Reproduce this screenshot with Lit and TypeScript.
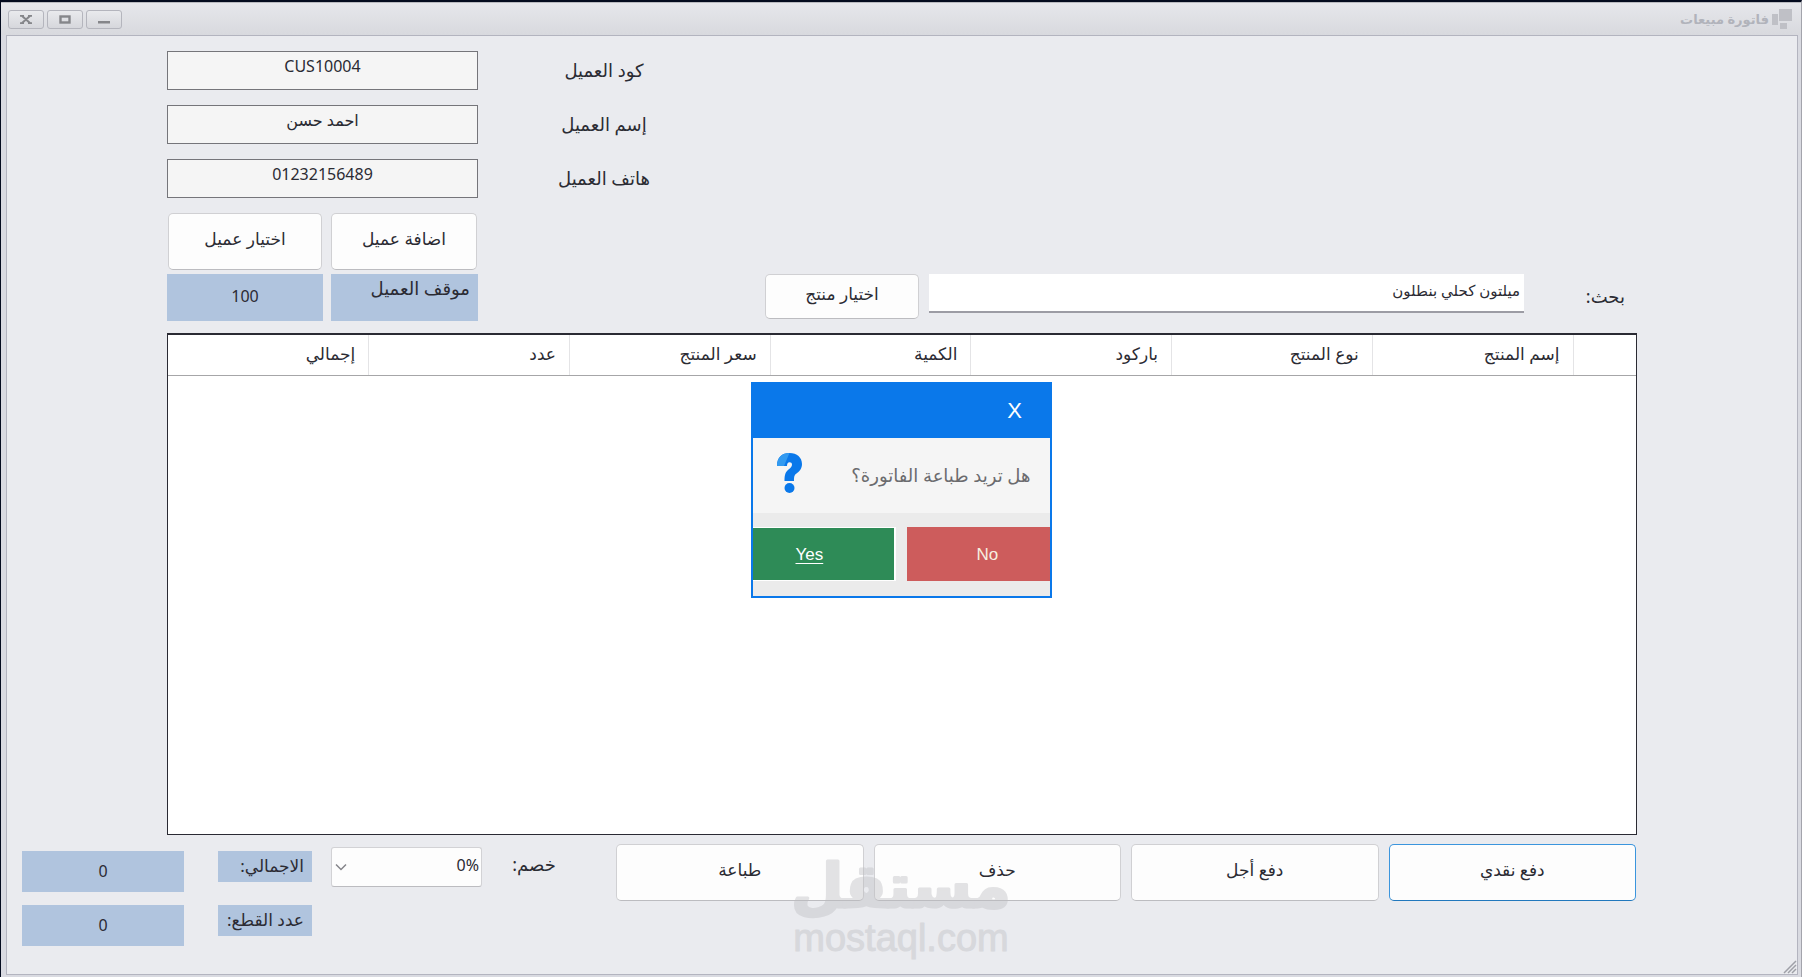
import { LitElement, html, css } from "lit";
import { customElement, state } from "lit/decorators.js";

const columns = ["إسم المنتج", "نوع المنتج", "باركود", "الكمية", "سعر المنتج", "عدد", "إجمالي"];

const actions = [
  { label: "دفع نقدي", primary: true },
  { label: "دفع أجل", primary: false },
  { label: "حذف", primary: false },
  { label: "طباعة", primary: false },
];

@customElement("app-root")
export class AppRoot extends LitElement {
  @state() private asking = true;

  static styles = css`
    :host {
      display: block;
      font-family: "Noto Sans", "DejaVu Sans", sans-serif;
      font-size: 16px;
      line-height: 24px;
      color: #2b2b33;
    }
    * { box-sizing: border-box; }
    button, input, select { font: inherit; color: inherit; margin: 0; }
    .window {
      position: relative;
      display: flex;
      flex-direction: column;
      min-height: 100vh;
      padding: 0 3px 2px 5px;
      background: #d9dae1;
      border-top: 2px solid #040b1e;
      border-left: 1px solid #040b1e;
      border-right: 1px solid #a3a4ac;
    }
    .titlebar {
      display: flex;
      align-items: center;
      justify-content: space-between;
      height: 33px;
      margin: 0 -3px 0 -5px;
      padding: 0 9px 0 7px;
      border-top: 1px solid #b9babf;
      background: linear-gradient(#e6e7eb, #d8d9de);
    }
    .title {
      display: flex;
      align-items: center;
      gap: 3px;
      margin: 0;
      font-size: 13px;
      line-height: 20px;
      font-weight: 700;
      color: #b1b3bb;
    }
    .controls { display: flex; gap: 3px; direction: ltr; }
    .control {
      display: grid;
      place-items: center;
      width: 36px;
      height: 19px;
      padding: 0;
      border: 1px solid #b4b5bd;
      border-radius: 3px;
      background: linear-gradient(#e9eaed, #d6d7dc);
    }
    .content {
      flex: 1;
      display: flex;
      flex-direction: column;
      padding: 15px 0 28px;
      border: 1px solid #b3b4bf;
      background: #eaebef;
    }
    .main {
      flex: 1;
      display: flex;
      flex-direction: column;
      padding: 0 160px;
    }
    .customer {
      align-self: flex-end;
      display: grid;
      grid-template-columns: 96px 311px;
      column-gap: 78px;
      row-gap: 15px;
      align-items: center;
    }
    .customer label { padding-bottom: 2px; text-align: center; white-space: nowrap; font-size: 18px; }
    .field {
      width: 100%;
      height: 39px;
      padding: 0 8px 9px;
      border: 1px solid #75757a;
      border-radius: 0;
      background: #f5f5f5;
      text-align: center;
      outline: none;
    }
    .pair {
      align-self: flex-end;
      display: grid;
      grid-template-columns: 147px 156px;
      column-gap: 8px;
      width: 311px;
    }
    .choices { margin: 15px 0 4px; padding: 0 1px; grid-template-columns: 146px 154px; column-gap: 9px; }
    .button {
      height: 57px;
      padding: 0 8px 6px;
      border: 1px solid #d0d0d3;
      border-bottom-color: #bcbcc0;
      border-radius: 5px;
      background: #fdfdfd;
      font-size: 17px;
    }
    .button.primary { border-color: #3b95dd; border-bottom-color: #2278bd; }
    .button.small { flex: none; width: 154px; height: 45px; }
    .search {
      display: flex;
      align-items: flex-start;
      gap: 10px;
      margin-bottom: 12px;
    }
    .search-label { width: 103px; padding: 10px 12px 0 0; white-space: nowrap; font-size: 18px; }
    .search-box {
      flex: 1;
      min-width: 0;
      height: 39px;
      padding: 0 4px 6px;
      border: 0;
      border-bottom: 2px solid #9c9ca4;
      background: #fff;
      font-size: 15px;
      text-align: right;
      outline: none;
    }
    .search .pair { margin-right: 277px; flex: none; align-self: auto; }
    .tag { background: #b0c4de; white-space: nowrap; }
    .status-label { height: 47px; padding: 2px 8px; font-size: 18px; }
    .status-value { height: 47px; line-height: 44px; text-align: center; }
    .grid {
      flex: 1;
      border: 1px solid #2a2a33;
      border-top-width: 2px;
      background: #fff;
    }
    table { width: 100%; border-collapse: collapse; table-layout: fixed; }
    th {
      height: 40px;
      padding: 0 13px 2px;
      border-left: 1px solid #e4e4e6;
      border-bottom: 1px solid #a6a6a8;
      font-size: 17px;
      font-weight: 400;
      text-align: right;
    }
    th:last-child { border-left: 0; }
    .selector { width: 63px; }
    .footer {
      display: flex;
      align-items: flex-start;
      padding: 9px 161px 0 15px;
    }
    .actions {
      flex: 1;
      display: grid;
      grid-template-columns: repeat(4, 1fr);
      gap: 10px;
    }
    .discount-label {
      width: 104px;
      margin-right: 30px;
      padding-top: 8px;
      text-align: center;
      white-space: nowrap;
      font-size: 18px;
    }
    .select-wrap { position: relative; width: 151px; margin: 3px 0 0 19px; }
    .select {
      appearance: none;
      width: 100%;
      height: 40px;
      padding: 0 2px 4px 28px;
      border: 1px solid #d2d2d5;
      border-bottom-color: #bcbcc0;
      border-radius: 3px;
      background: #fdfdfd;
      direction: ltr;
      text-align: right;
      text-align-last: right;
      outline: none;
    }
    .chevron { position: absolute; left: 4px; top: 16px; pointer-events: none; }
    .totals {
      display: grid;
      grid-template-columns: 94px 162px;
      column-gap: 34px;
      row-gap: 13px;
      padding-top: 7px;
      align-items: start;
    }
    .total-label { height: 31px; line-height: 30px; padding: 0 8px; font-size: 17px; text-align: right; }
    .total-value { height: 41px; line-height: 40px; text-align: center; }
    .grip { position: absolute; right: 4px; bottom: 3px; }
    .watermark {
      position: absolute;
      left: 0;
      right: 0;
      bottom: 8px;
      display: flex;
      justify-content: center;
      opacity: 0.42;
      pointer-events: none;
    }
    .mark {
      fill: #bebec2;
      stroke: #bebec2;
      stroke-linejoin: round;
      text-anchor: middle;
    }
    .mark-arabic { font: 700 60px "DejaVu Sans", sans-serif; stroke-width: 3px; }
    .mark-latin { font: 400 38px "Liberation Sans", sans-serif; stroke-width: 1px; }
    .overlay {
      position: absolute;
      inset: 0;
      display: grid;
      place-items: center;
      pointer-events: none;
    }
    .dialog {
      width: 301px;
      border: 2px solid #0a78ea;
      background: #ebebeb;
      pointer-events: auto;
    }
    .dialog-bar { display: flex; height: 54px; padding-right: 19px; background: #0a78ea; }
    .close {
      width: 32px;
      padding: 0;
      border: 0;
      background: none;
      color: #fff;
      font-family: "Liberation Sans", sans-serif;
      font-size: 22px;
    }
    .message {
      display: flex;
      align-items: center;
      justify-content: space-between;
      height: 75px;
      padding: 0 19px 0 23px;
      background: #f5f5f5;
      color: #6b6b6e;
      font-size: 18px;
    }
    .message p { margin: 0; white-space: nowrap; }
    .message svg { margin-bottom: 4px; }
    .answers { display: flex; align-items: center; justify-content: space-between; padding: 14px 0 15px; }
    .answer {
      height: 54px;
      border: 0;
      color: #fff;
      font-family: "Liberation Sans", sans-serif;
      font-size: 17px;
      text-align: left;
    }
    .no { width: 143px; padding: 2px 0 0 70px; background: #cd5c5c; color: #f6efe0; }
    .yes {
      width: 143px;
      padding: 2px 0 0 43px;
      border: 1px solid #fff;
      border-left: 0;
      border-right-width: 2px;
      background: #2e8b57;
      text-decoration: underline;
      text-underline-offset: 3px;
    }
  `;

  private dismiss() {
    this.asking = false;
  }

  private customerField(id: string, label: string, value: string) {
    return html`
      <label for=${id}>${label}</label>
      <input class="field" id=${id} type="text" readonly .value=${value} />
    `;
  }

  private renderDialog() {
    return html`
      <div class="overlay">
        <div class="dialog" role="dialog" aria-labelledby="question">
          <div class="dialog-bar">
            <button class="close" @click=${this.dismiss}>X</button>
          </div>
          <div class="message">
            <p id="question">هل تريد طباعة الفاتورة؟</p>
            <svg width="27" height="42" viewBox="0 0 27 42" aria-hidden="true">
              <path d="M1 14C1 5 6 1 13.500 1C21 1 26 5.500 26 12C26 17 23 19.500 20.500 21.500C18.500 23 18 24 18 29H8.500C8.500 22.500 9.500 20 12.500 17.500C15 15.500 16 14.500 16 12.500C16 11 15 10.200 13.600 10.200C11.800 10.200 11 11.500 11 14Z" fill="#0a78ea" />
              <path d="M1 14C1 5 6 1 13.500 1L8 14Z" fill="#329af0" />
              <circle cx="13.500" cy="36" r="5" fill="#0a78ea" />
            </svg>
          </div>
          <div class="answers">
            <button class="answer no" @click=${this.dismiss}>No</button>
            <button class="answer yes" @click=${this.dismiss}>Yes</button>
          </div>
        </div>
      </div>
    `;
  }

  render() {
    return html`
      <div class="window" dir="rtl">
        <header class="titlebar">
          <h1 class="title">
            <svg width="20" height="20" viewBox="0 0 20 20" fill="#bfc0c6" aria-hidden="true">
              <rect x="7" y="0" width="13" height="12" />
              <rect x="0" y="5" width="6" height="11" />
              <rect x="8" y="14" width="7" height="6" />
            </svg>
            فاتورة مبيعات
          </h1>
          <div class="controls">
            <button class="control" aria-label="إغلاق">
              <svg width="12" height="9" viewBox="0 0 12 9"><path d="M1.500 .5L10.500 8.500M10.500 .5L1.500 8.500M0 .7H4M8 .7H12M0 8.300H4M8 8.300H12" stroke="#85868a" stroke-width="2" /></svg>
            </button>
            <button class="control" aria-label="تكبير">
              <svg width="12" height="9" viewBox="0 0 12 9"><rect x="1.500" y="1.500" width="9" height="6" fill="none" stroke="#85868a" stroke-width="2.400" /></svg>
            </button>
            <button class="control" aria-label="تصغير">
              <svg width="12" height="9" viewBox="0 0 12 9"><rect x="0" y="6" width="12" height="2.500" fill="#85868a" /></svg>
            </button>
          </div>
        </header>

        <div class="content">
          <main class="main">
            <div class="customer">
              ${this.customerField("code", "كود العميل", "CUS10004")}
              ${this.customerField("name", "إسم العميل", "احمد حسن")}
              ${this.customerField("phone", "هاتف العميل", "01232156489")}
            </div>
            <div class="pair choices">
              <button class="button">اضافة عميل</button>
              <button class="button">اختيار عميل</button>
            </div>
            <div class="search">
              <label class="search-label" for="search">بحث:</label>
              <input class="search-box" id="search" type="text" .value=${"ميلتون كحلي بنطلون"} />
              <button class="button small">اختيار منتج</button>
              <div class="pair">
                <label class="tag status-label" for="status">موقف العميل</label>
                <output class="tag status-value" id="status">100</output>
              </div>
            </div>
            <div class="grid">
              <table>
                <thead>
                  <tr>
                    <th class="selector"></th>
                    ${columns.map((name) => html`<th scope="col">${name}</th>`)}
                  </tr>
                </thead>
                <tbody></tbody>
              </table>
            </div>
          </main>

          <footer class="footer">
            <div class="actions">
              ${actions.map((a) => html`<button class="button ${a.primary ? "primary" : ""}">${a.label}</button>`)}
            </div>
            <label class="discount-label" for="discount">خصم:</label>
            <div class="select-wrap">
              <select class="select" id="discount">
                <option>0%</option>
              </select>
              <svg class="chevron" width="12" height="8" viewBox="0 0 12 8" aria-hidden="true">
                <path d="M1 1.500L6 6.500L11 1.500" fill="none" stroke="#85858a" stroke-width="1.500" />
              </svg>
            </div>
            <div class="totals">
              <label class="tag total-label" for="total">الاجمالي:</label>
              <output class="tag total-value" id="total">0</output>
              <label class="tag total-label" for="pieces">عدد القطع:</label>
              <output class="tag total-value" id="pieces">0</output>
            </div>
          </footer>
        </div>

        <svg class="grip" width="14" height="14" viewBox="0 0 14 14" aria-hidden="true">
          <path d="M1 13L13 1M5 13L13 5M9 13L13 9" stroke="#9fa0a8" stroke-width="1.500" />
        </svg>

        <div class="watermark">
          <svg width="260" height="130" viewBox="0 0 260 130">
            <text class="mark mark-arabic" x="130" y="68">مستقل</text>
            <text class="mark mark-latin" x="130" y="112" direction="ltr">mostaql.com</text>
          </svg>
        </div>

        ${this.asking ? this.renderDialog() : null}
      </div>
    `;
  }
}
